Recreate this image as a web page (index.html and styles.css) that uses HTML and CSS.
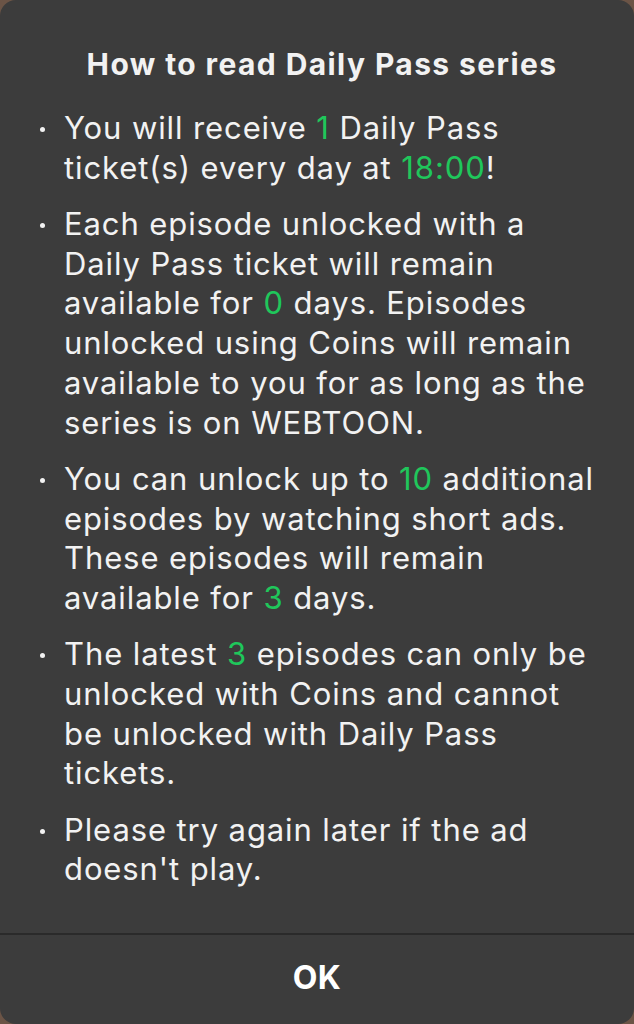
FILE: index.html
```html
<!DOCTYPE html>
<html>
<head>
<meta charset="utf-8">
<link rel="stylesheet" href="styles.css">
</head>
<body>
<div class="dialog">
  <div class="content">
    <h1 class="title">How to read Daily Pass series</h1>
    <ul class="list">
      <li>You will receive <span class="g">1</span> Daily Pass ticket(s) every day at <span class="g">18:00</span>!</li>
      <li>Each episode unlocked with a Daily Pass ticket will remain available for <span class="g">0</span> days. Episodes unlocked using Coins will remain available to you for as long as the series is on WEBTOON.</li>
      <li>You can unlock up to <span class="g">10</span> additional episodes by watching short ads. These episodes will remain available for <span class="g">3</span> days.</li>
      <li>The latest <span class="g">3</span> episodes can only be unlocked with Coins and cannot be unlocked with Daily Pass tickets.</li>
      <li>Please try again later if the ad doesn't play.</li>
    </ul>
  </div>
  <div class="footer">
    <button class="ok">OK</button>
  </div>
</div>
</body>
</html>
```

FILE: styles.css
```css
html, body {
  margin: 0;
  padding: 0;
  height: 100%;
}
body {
  background: #6b5446;
  font-family: Inter, "Noto Sans", sans-serif;
  color: #f2f2f2;
}
.dialog {
  height: 1024px;
  background: #3c3c3c;
  border-radius: 16px;
  display: flex;
  flex-direction: column;
  overflow: hidden;
}
.content {
  flex: 1;
  padding: 44px 30px 0 40px;
}
.title {
  margin: 0 0 24px;
  text-align: center;
  font-size: 30px;
  font-weight: 700;
  line-height: 40px;
  letter-spacing: 1.4px;
}
.list {
  list-style: none;
  margin: 0;
  padding: 0;
}
.list li {
  position: relative;
  padding-left: 24px;
  font-size: 31px;
  line-height: 39.7px;
  margin-bottom: 16.6px;
  letter-spacing: 0.9px;
}
.list li::before {
  content: "";
  position: absolute;
  left: 0;
  top: 19px;
  width: 5px;
  height: 5px;
  border-radius: 50%;
  background: #f2f2f2;
}
.g {
  color: #1fc75b;
}
.footer {
  border-top: 2px solid #2a2a2a;
  height: 89px;
  display: flex;
  align-items: center;
  justify-content: center;
}
.ok {
  background: none;
  border: none;
  color: #ffffff;
  font-family: Inter, "Noto Sans", sans-serif;
  font-size: 32px;
  font-weight: 700;
  letter-spacing: 0.5px;
  padding: 0;
  margin-top: -4px;
}
```
